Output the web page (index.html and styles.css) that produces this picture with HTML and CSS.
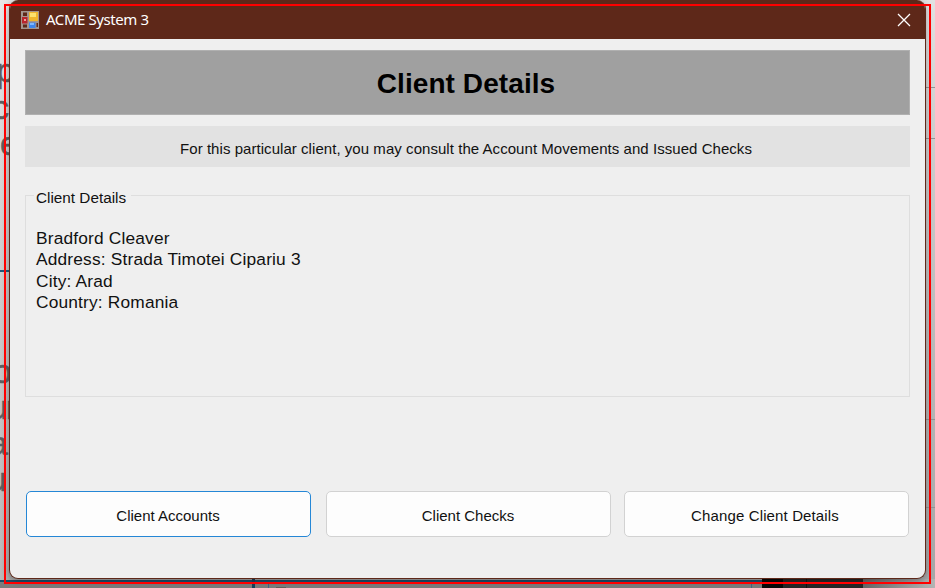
FILE: index.html
```html
<!DOCTYPE html>
<html lang="en">
<head>
<meta charset="utf-8">
<title>ACME System 3</title>
<link rel="stylesheet" href="styles.css">
</head>
<body>
<div class="desktop">
  <svg class="backdrop" width="935" height="588" viewBox="0 0 935 588" aria-hidden="true">
    <defs>
      <linearGradient id="left" x1="0" x2="1" y1="0" y2="0"><stop offset="0" stop-color="#fff" stop-opacity=".22"/><stop offset="1" stop-color="#fff" stop-opacity="0"/></linearGradient>
      <linearGradient id="down" x1="0" x2="0" y1="0" y2="1"><stop offset="0" stop-color="#e2e2e2"/><stop offset=".2" stop-color="#d0d0d0"/><stop offset=".6" stop-color="#b9b9b9"/><stop offset="1" stop-color="#a6a6a6"/></linearGradient>
      <linearGradient id="corner" x1="0" x2="1" y1="0" y2="0"><stop offset="0" stop-color="#666"/><stop offset=".7" stop-color="#a0a0a0"/><stop offset="1" stop-color="#b4b4b4"/></linearGradient>
    </defs>
    <rect width="935" height="588" fill="url(#down)"/>
    <rect width="10" height="588" fill="url(#left)"/>
    <g class="behind">
      <text x="-4" y="82">p</text><text x="-8" y="119">c</text><text x="0" y="155">e</text>
      <text x="-7" y="383">o</text><text x="-11" y="419">u</text><text x="6" y="419">r</text><text x="-11" y="455">a</text><text x="-12" y="491">u</text>
    </g>
    <path d="M0 271H10" stroke="#1d587b" stroke-width="2"/>
    <path d="M926 87.500H935M926 138.500H935M926 419.500H935M926 507.500H935" stroke="#929292"/>
    <rect x="0" y="582" width="762" height="6" fill="#7c7c7c"/>
    <path d="M0 581H762" stroke="#1d4c68" stroke-width="2"/>
    <path d="M253.500 579V588" stroke="#173f5a" stroke-width="3"/>
    <path d="M268.500 582V588M751.500 582V588" stroke="#416784"/>
    <path d="M276 587.500H286" stroke="#625f5a"/>
    <rect x="762" y="579" width="21" height="9" fill="#080808"/>
    <rect x="783" y="579" width="80" height="9" fill="#252525"/>
    <path d="M806.500 579V588" stroke="#111"/>
    <rect x="863" y="579" width="72" height="9" fill="url(#corner)"/>
  </svg>

  <main class="window">
    <header class="titlebar">
      <svg class="app-icon" width="18" height="18" viewBox="0 0 18 18" aria-hidden="true">
        <rect width="18" height="18" fill="#a3958e"/>
        <rect x="2" y="1.500" width="4" height="3.500" fill="#5e2819"/>
        <rect x="1" y="6" width="5.500" height="6.500" fill="#b9252c"/><rect x="3" y="8" width="2" height="2" fill="#f2a09a"/>
        <rect x="2" y="13.500" width="4" height="3" fill="#5e2819"/>
        <rect x="8" y="1" width="9" height="9" fill="#f0b62b"/><rect x="9" y="2" width="6" height="4" fill="#fde16c"/>
        <rect x="8" y="11.500" width="6.500" height="5.500" fill="#3f86ec"/><rect x="9" y="12" width="4" height="2" fill="#80b8ff"/>
        <rect x="15.500" y="12" width="1.500" height="4" fill="#5e2819"/>
      </svg>
      <span class="caption">ACME System 3</span>
      <svg class="close" width="14" height="14" viewBox="0 0 14 14" role="img" aria-label="Close"><path d="M1 1L13 13M13 1L1 13" stroke="#fff" stroke-width="1.300"/></svg>
    </header>
    <div class="content">
      <h1 class="heading">Client Details</h1>
      <p class="notice">For this particular client, you may consult the Account Movements and Issued Checks</p>
      <section class="group">
        <h2 class="legend">Client Details</h2>
        <div class="details">
          <div class="line">Bradford Cleaver</div>
          <div class="line">Address: Strada Timotei Cipariu 3</div>
          <div class="line">City: Arad</div>
          <div class="line">Country: Romania</div>
        </div>
      </section>
      <div class="actions">
        <button class="action focused">Client Accounts</button>
        <button class="action">Client Checks</button>
        <button class="action wide">Change Client Details</button>
      </div>
    </div>
  </main>
  <div class="outline"></div>
</div>
</body>
</html>
```
FILE: styles.css
```css
* { box-sizing: border-box; }
body { margin: 0; overflow: hidden; font-family: "Liberation Sans", Arial, sans-serif; color: #111; }
.desktop { position: relative; width: 935px; height: 588px; padding-left: 9px; overflow: hidden; }
.backdrop { position: absolute; left: 0; top: 0; }
.behind { font: 34px "Liberation Sans", sans-serif; fill: #5c5e60; stroke: #5c5e60; stroke-width: .6px; }
.window {
  position: relative; width: 917px; height: 579px; overflow: hidden;
  border: 1px solid #5e2819; border-top: 0; border-radius: 9px;
  background: #efefef; box-shadow: 0 2px 6px rgba(0, 0, 0, .3);
}
.titlebar { display: flex; align-items: center; height: 39px; padding: 0 14px 0 11px; background: #5e2819; color: #fff; }
.app-icon { flex: none; }
.caption { margin: -2px 0 0 7px; font: 15px/20px "Noto Sans", sans-serif; letter-spacing: -.42px; }
.close { margin-left: auto; }
.content { padding: 11px 15px 0; }
.heading {
  display: flex; align-items: center; justify-content: center; height: 65px; margin: 0; padding: 2px 3px 0 0;
  border: 1px solid #b0b0b0; background: #a0a0a0;
  color: #000; font-size: 28px; font-weight: 700; letter-spacing: .08px;
}
.notice { display: flex; align-items: center; justify-content: center; height: 41px; margin: 11px 0 0; padding: 3px 3px 0 0; background: #e2e2e2; font-size: 15px; letter-spacing: .05px; }
.group { height: 202px; margin-top: 28px; border: 1px solid #dedede; padding: 0 10px; }
.legend { width: max-content; margin: -8px 0 0 -2px; padding: 0 5px 0 2px; background: #efefef; font-size: 15.300px; font-weight: 400; line-height: 20px; }
.details { margin-top: 20px; font-size: 17.330px; line-height: 21.300px; letter-spacing: .17px; }
.actions { display: grid; grid-template-columns: 285px 285px 285px; column-gap: 14px; margin: 94px 0 0 1px; }
.action { height: 46px; padding: 3px 1px 0 0; border: 1px solid #d2d2d2; border-radius: 5px; background: #fdfdfd; color: #111; font: 15px "Liberation Sans", Arial, sans-serif; }
.action:nth-child(2) { margin: 0 -1px 0 1px; }
.wide { padding-right: 3px; letter-spacing: .13px; }
.focused { border-color: #2587d6; }
.outline { position: absolute; left: 4px; top: 4px; width: 927px; height: 580px; border: 2px solid #f00; }
```
